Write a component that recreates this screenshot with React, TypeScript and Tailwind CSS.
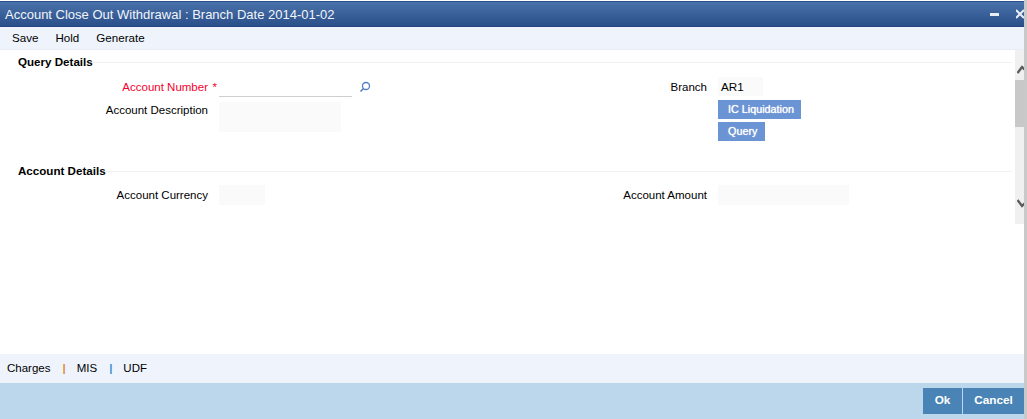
import { ReactNode } from "react";

function SectionTitle({ title }: { title: string }) {
  return (
    <div className="flex items-center pl-[18px] h-[24px]">
      <h2 className="font-bold text-[11.6px] leading-[24px] text-black">{title}</h2>
      <div className="flex-1 h-px bg-[#f0f0f0]" />
    </div>
  );
}

function Field({ label, className, children }: { label: ReactNode; className: string; children: ReactNode }) {
  return (
    <div className="flex items-start gap-[11px]">
      <label className={`flex-1 text-[11.5px] text-right ${className}`}>{label}</label>
      <div className="w-[300px] shrink-0">{children}</div>
    </div>
  );
}

function Box({ className, children }: { className: string; children?: ReactNode }) {
  return <div className={`bg-[#fafafa] text-[11.7px] leading-[20px] text-black ${className}`}>{children}</div>;
}

function Button({ children, className }: { children: ReactNode; className: string }) {
  return (
    <button className={`block h-[19px] bg-[#6a94d4] text-white text-[10.8px] leading-[19px] text-left pl-[10px] [text-shadow:0_0_1px_#fff] ${className}`}>
      {children}
    </button>
  );
}

function Chevron({ up }: { up?: boolean }) {
  return (
    <svg width="8" height="9" viewBox="0 0 8 9" className="block ml-[2px]">
      {up ? (
        <path d="M0.5 8 L5 2 L8 5" fill="none" stroke="#5c5c5c" strokeWidth="2.4" />
      ) : (
        <path d="M0.5 1 L5 7 L8 4" fill="none" stroke="#5c5c5c" strokeWidth="2.4" />
      )}
    </svg>
  );
}

export default function App() {
  return (
    <div className="w-[1027px] h-[419px] flex bg-white overflow-hidden font-['Liberation_Sans',Arial,sans-serif]">
      <div className="flex-1 min-w-0 flex flex-col">
        {/* Title bar */}
        <div className="h-[26px] shrink-0 flex items-center justify-between pl-[5px] mt-px border-t border-b border-t-[#2c4f8f] border-b-[#27467f] bg-gradient-to-b from-[#4a72aa] to-[#2a4f8a] overflow-hidden">
          <h1 className="text-[13px] text-[#f1f5fa] leading-none">Account Close Out Withdrawal : Branch Date 2014-01-02</h1>
          <div className="flex items-center gap-[17px]">
            <span className="block w-[9px] h-[3px] bg-[#e8edf5]" />
            <svg width="8" height="10" viewBox="0 0 8 10" className="block">
              <path d="M0 1 L8 9 M0 9 L8 1" stroke="#e8edf5" strokeWidth="2" />
            </svg>
          </div>
        </div>

        {/* Toolbar */}
        <nav className="h-[23px] shrink-0 flex items-center gap-[17px] pl-[12px] bg-[#eff4fc] border-b border-[#e8edf3] text-[11.6px] text-black">
          <span>Save</span>
          <span>Hold</span>
          <span>Generate</span>
        </nav>

        <div className="flex-1 flex min-h-0">
          <main className="flex-1 min-w-0 pr-[3px]">
            <SectionTitle title="Query Details" />
            <div className="grid grid-cols-[519px_1fr] pt-[2px] h-[85px]">
              <div className="flex flex-col gap-[4px]">
                <Field
                  className="leading-[22px] text-[#f5002d]"
                  label={
                    <>
                      Account Number<span className="inline-block ml-[4px] -mr-[9px] w-[5px]">*</span>
                    </>
                  }
                >
                  <div className="flex items-center">
                    <div className="w-[133px] h-[21px] border-b border-[#cfcfcf]" />
                    <svg width="12" height="12" viewBox="0 0 12 12" className="block ml-[7px] mt-px">
                      <circle cx="7" cy="5" r="3.5" fill="none" stroke="#4f7fc4" strokeWidth="1.3" />
                      <path d="M4.5 7.5 L1.5 10.5" stroke="#4f7fc4" strokeWidth="1.6" />
                    </svg>
                  </div>
                </Field>
                <Field className="leading-[16px] text-black" label="Account Description">
                  <Box className="w-[122px] h-[30px]" />
                </Field>
              </div>
              <div className="grid grid-cols-[188px_1fr] gap-x-[11px]">
                <label className="text-[11.5px] leading-[22px] text-right text-black">Branch</label>
                <div className="flex flex-col">
                  <Box className="w-[45px] h-[19px] mt-px pl-[3px]">AR1</Box>
                  <Button className="w-[83px] mt-[4px]">IC Liquidation</Button>
                  <Button className="w-[47px] mt-[3px]">Query</Button>
                </div>
              </div>
            </div>

            <SectionTitle title="Account Details" />
            <div className="grid grid-cols-[519px_1fr] pt-[2px]">
              <Field className="leading-[20px] text-black" label="Account Currency">
                <Box className="w-[46px] h-[20px]" />
              </Field>
              <div className="grid grid-cols-[188px_1fr] gap-x-[11px]">
                <label className="text-[11.5px] leading-[20px] text-right text-black">Account Amount</label>
                <Box className="w-[131px] h-[20px]" />
              </div>
            </div>
          </main>

          {/* Scrollbar */}
          <div className="w-[9px] h-[174px] shrink-0 bg-[#f0f0f0] flex flex-col">
            <div className="h-[15px]" />
            <Chevron up />
            <div className="h-[6px]" />
            <div className="h-[47px] bg-[#c8c8c8]" />
            <div className="flex-1" />
            <Chevron />
            <div className="h-[16px]" />
          </div>
        </div>

        {/* Tabs */}
        <div className="h-[29px] shrink-0 flex items-center pl-[7px] bg-[#eff4fc] text-[11.5px] text-black">
          <span>Charges</span>
          <span className="ml-[12px] mr-[11px] font-bold text-[#d98c3a]">|</span>
          <span>MIS</span>
          <span className="ml-[12px] mr-[11px] font-bold text-[#3f8fd0]">|</span>
          <span>UDF</span>
        </div>

        {/* Footer */}
        <footer className="h-[36px] shrink-0 flex justify-end items-start pt-[5px] bg-[#bcd7ec]">
          <button className="w-[39px] h-[26px] bg-[#4a83b5] text-white font-bold text-[11.8px]">Ok</button>
          <button className="w-[61px] h-[26px] ml-px bg-[#4a83b5] text-white font-bold text-[11.8px]">Cancel</button>
        </footer>
      </div>
      <div className="w-[3px] shrink-0 bg-[#c9c9c9]" />
    </div>
  );
}
